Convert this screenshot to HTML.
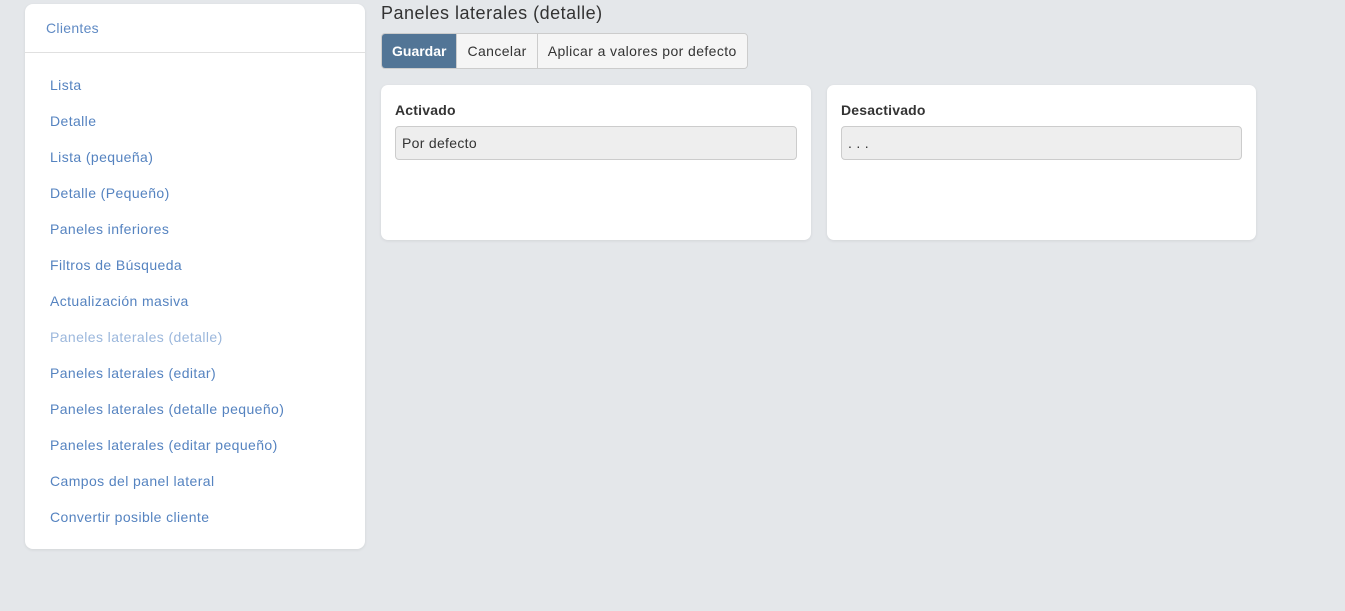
<!DOCTYPE html>
<html><head><style>
*{box-sizing:border-box;margin:0;padding:0}
body{width:1345px;height:611px;background:#e4e7ea;font-family:"Liberation Sans",sans-serif;position:relative;overflow:hidden;color:#333}
.side{position:absolute;left:25px;top:4px;width:340px;height:545px;background:#fff;border-radius:8px;box-shadow:0 1px 3px rgba(0,0,0,.08)}
.side .hd{height:49px;border-bottom:1px solid #e0e0e0;padding:16px 0 0 21px;color:#5f8ac4;font-size:14px;letter-spacing:.3px}
.side a{position:absolute;left:25px;font-size:14px;color:#5583c0;text-decoration:none;letter-spacing:.4px}
.side a.act{color:#9bb7dc}
h1{position:absolute;left:381px;top:3px;font-size:18px;font-weight:normal;color:#333;letter-spacing:.5px}
.btns{position:absolute;left:381px;top:33px;height:36px;display:flex;border:1px solid #ccc;border-radius:4px;overflow:hidden}
.btns div{padding:0 10px;line-height:34px;font-size:14px;background:#f5f5f5;border-left:1px solid #ccc;color:#333;letter-spacing:.4px}
.btns div.p{background:#527596;color:#fff;font-weight:bold;border:none;letter-spacing:0}
.card{position:absolute;top:85px;width:430px;height:155px;background:#fff;border-radius:7px;box-shadow:0 1px 3px rgba(0,0,0,.08)}
.card b{position:absolute;left:14px;top:17px;font-size:14px;color:#333;letter-spacing:.2px}
.card .in{position:absolute;left:14px;top:41px;width:402px;height:34px;background:#eee;border:1px solid #ccc;border-radius:4px;font-size:14px;padding:8px 6px;color:#333;letter-spacing:.3px}
</style></head><body>
<div class="side"><div class="hd">Clientes</div>
<a style="top:73px">Lista</a>
<a style="top:109px">Detalle</a>
<a style="top:145px">Lista (pequeña)</a>
<a style="top:181px">Detalle (Pequeño)</a>
<a style="top:217px">Paneles inferiores</a>
<a style="top:253px">Filtros de Búsqueda</a>
<a style="top:289px">Actualización masiva</a>
<a class="act" style="top:325px">Paneles laterales (detalle)</a>
<a style="top:361px">Paneles laterales (editar)</a>
<a style="top:397px">Paneles laterales (detalle pequeño)</a>
<a style="top:433px">Paneles laterales (editar pequeño)</a>
<a style="top:469px">Campos del panel lateral</a>
<a style="top:505px">Convertir posible cliente</a>
</div>
<h1>Paneles laterales (detalle)</h1>
<div class="btns"><div class="p">Guardar</div><div>Cancelar</div><div>Aplicar a valores por defecto</div></div>
<div class="card" style="left:381px"><b>Activado</b><div class="in">Por defecto</div></div>
<div class="card" style="left:827px;width:429px"><b>Desactivado</b><div class="in" style="width:401px">. . .</div></div>
</body></html>
